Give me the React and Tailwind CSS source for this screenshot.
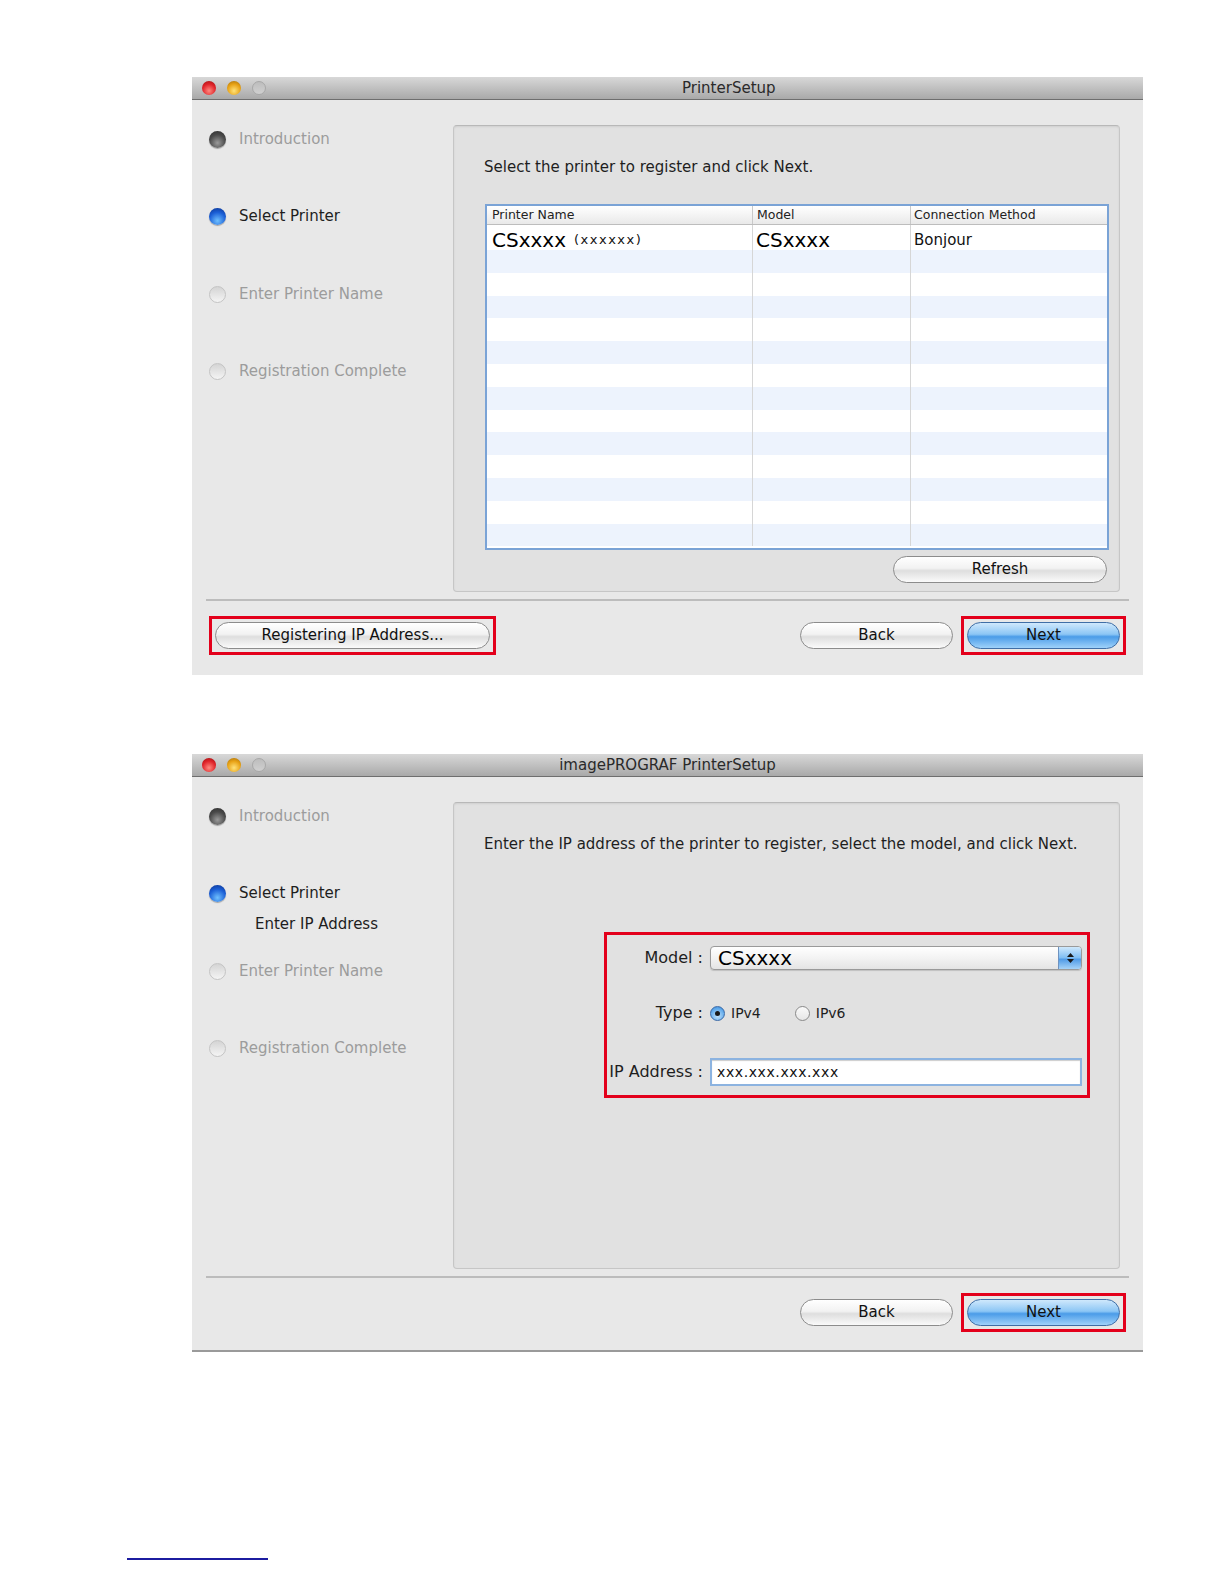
import React from 'react'

const font = { fontFamily: '"DejaVu Sans", "Liberation Sans", sans-serif' }

// little aqua sphere used for the steps list
const StepDot = ({ kind }) => {
    if (kind === 'done') {
        return <span className="block w-[17px] h-[17px] rounded-full bg-[radial-gradient(circle_at_50%_70%,#9a9a9a_0%,#4a4a4a_55%,#2a2a2a_100%)] shadow-[0_1px_1px_rgba(0,0,0,0.3)]" />
    }
    if (kind === 'current') {
        return <span className="block w-[17px] h-[17px] rounded-full bg-[radial-gradient(circle_at_50%_75%,#6fc0ff_0%,#1b5fd6_55%,#0a2f8a_100%)] shadow-[0_1px_1px_rgba(0,0,0,0.3)]" />
    }
    return <span className="block w-[17px] h-[17px] rounded-full border border-[#c4c4c4] bg-[linear-gradient(#d4d4d4,#f4f4f4)]" />
}

const Steps = ({ current, sub }) => {
    const items = ['Introduction', 'Select Printer', 'Enter Printer Name', 'Registration Complete']
    return (
        <div className="w-[261px] shrink-0 pt-[5px]">
            {items.map((label, i) => {
                const kind = i < current ? 'done' : i === current ? 'current' : 'todo'
                return (
                    <div key={label} className="h-[77.5px]">
                        <div className="flex items-center h-[18px] pl-[17px] gap-[13px]">
                            <StepDot kind={kind} />
                            <span className={`text-[15px] ${kind === 'current' ? 'text-[#1e1e1e]' : 'text-[#9c9c9c]'}`}>
                                {label}
                            </span>
                        </div>
                        {kind === 'current' && sub && (
                            <div className="pl-[63px] mt-[12px] h-[18px] leading-[18px] text-[15px] text-[#1e1e1e]">
                                {sub}
                            </div>
                        )}
                    </div>
                )
            })}
        </div>
    )
}

const Button = ({ children, width, primary }) => (
    <div
        className={`h-[27px] rounded-full flex items-center justify-center text-[15px] text-[#111] border ${
            primary
                ? 'border-[#3f6ea6] bg-[linear-gradient(#cfe8fc_0%,#8cc6f5_45%,#4b9ce8_55%,#9fd2fa_100%)]'
                : 'border-[#8c8c8c] bg-[linear-gradient(#ffffff_0%,#f2f2f2_45%,#dedede_55%,#fafafa_100%)]'
        }`}
        style={{ width }}
    >
        {children}
    </div>
)

const RedBox = ({ children }) => (
    <div className="border-[3px] border-[#e3001b] p-[3px]">{children}</div>
)

const Window = ({ title, titlePad, children, left, current, sub, bottomBorder }) => (
    <div className={`w-[951px] h-[598px] flex flex-col bg-[#e8e8e8] ${bottomBorder ? 'border-b-2 border-[#9a9a9a]' : ''}`}>
        <div className="h-[23px] shrink-0 relative flex items-center bg-[linear-gradient(#d8d8d8,#a9a9a9)] border-b border-[#6e6e6e]">
            <div className="flex items-center gap-[11px] pl-[10px]">
                <span className="block w-[14px] h-[14px] rounded-full bg-[radial-gradient(circle_at_50%_70%,#ff8a80_0%,#e0242a_55%,#9a1010_100%)]" />
                <span className="block w-[14px] h-[14px] rounded-full bg-[radial-gradient(circle_at_50%_70%,#ffe27a_0%,#e8a215_55%,#a06a08_100%)]" />
                <span className="block w-[14px] h-[14px] rounded-full border border-[#a8a8a8] bg-[linear-gradient(#bdbdbd,#d0d0d0)]" />
            </div>
            <div
                className={`absolute inset-y-0 flex items-center text-[15px] text-[#2a2a2a] ${titlePad ? '' : 'left-0 right-0 justify-center'}`}
                style={titlePad ? { left: titlePad } : undefined}
            >
                {title}
            </div>
        </div>
        <div className="flex-1 flex flex-col">
            <div className="flex pt-[25px]">
                <Steps current={current} sub={sub} />
                <div className="w-[667px] h-[467px] rounded-[4px] border border-[#c6c6c6] border-t-[#b8b8b8] bg-[#e1e1e1] shadow-[inset_0_1px_2px_rgba(0,0,0,0.08)]">
                    {children}
                </div>
            </div>
            <div className="mx-[14px] mt-[7px] h-[2px] bg-[#bcbcbc]" />
            <div className="flex items-center mt-[15px] px-[17px]">
                <div className="flex-1">{left}</div>
                <div className="flex items-center">
                    <div className="mr-[8px]">
                        <Button width={153}>Back</Button>
                    </div>
                    <RedBox>
                        <Button width={153} primary>Next</Button>
                    </RedBox>
                </div>
            </div>
        </div>
    </div>
)

const Table = () => {
    const rows = Array.from({ length: 13 })
    const cols = 'grid grid-cols-[266px_158px_196px]'
    return (
        <div className="ml-[31px] w-[624px] h-[346px] border-2 border-[#7aa3d6] bg-white overflow-hidden">
            <div className={`${cols} h-[19px] bg-[linear-gradient(#ffffff,#e9e9e9)] border-b border-[#bdbdbd] text-[12.5px] text-[#222] leading-[18px]`}>
                <div className="pl-[5px] border-r border-[#c9c9c9]">Printer Name</div>
                <div className="pl-[4px] border-r border-[#c9c9c9]">Model</div>
                <div className="pl-[3px]">Connection Method</div>
            </div>
            <div className={`${cols} h-[25px] items-center`}>
                <div className="pl-[5px] h-full flex items-center border-r border-[#d6d6d6]">
                    <span className="text-[20px] text-black">CSxxxx</span>
                    <span className="text-[13px] tracking-[1.5px] text-[#111] ml-[8px]">(xxxxxx)</span>
                </div>
                <div className="pl-[3px] h-full flex items-center border-r border-[#d6d6d6]">
                    <span className="text-[20px] text-black">CSxxxx</span>
                </div>
                <div className="pl-[3px] h-full flex items-center text-[15px] text-[#111]">Bonjour</div>
            </div>
            {rows.map((_, i) => (
                <div key={i} className={`${cols} h-[22.8px] ${i % 2 === 0 ? 'bg-[#edf3fd]' : 'bg-white'}`}>
                    <div className="border-r border-[#d6d6d6]" />
                    <div className="border-r border-[#d6d6d6]" />
                    <div />
                </div>
            ))}
        </div>
    )
}

const Radio = ({ on }) => (
    <span className={`w-[15px] h-[15px] rounded-full flex items-center justify-center border ${on ? 'border-[#3a6aa8] bg-[radial-gradient(circle_at_50%_70%,#bfe1fb_0%,#5aa6ea_70%,#3d80cc_100%)]' : 'border-[#8a8a8a] bg-[linear-gradient(#fafafa,#e6e6e6)]'}`}>
        {on && <span className="block w-[5px] h-[5px] rounded-full bg-[#1a1a1a]" />}
    </span>
)

export default function App() {
    return (
        <div className="w-[1224px] h-[1584px] bg-white overflow-hidden" style={font}>
            <div className="pt-[77px] pl-[192px]">
                <Window
                    title="PrinterSetup"
                    titlePad={490}
                    current={1}
                    left={
                        <div className="inline-block">
                            <RedBox>
                                <Button width={275}>Registering IP Address...</Button>
                            </RedBox>
                        </div>
                    }
                >
                    <div className="pt-[31px] pl-[30px] h-[20px] leading-[20px] text-[15px] text-[#1e1e1e] box-content">
                        Select the printer to register and click Next.
                    </div>
                    <div className="mt-[27px]">
                        <Table />
                    </div>
                    <div className="flex justify-end pr-[12px] mt-[6px]">
                        <Button width={214}>Refresh</Button>
                    </div>
                </Window>

                <div className="h-[79px]" />

                <Window
                    title="imagePROGRAF PrinterSetup"
                    current={1}
                    sub="Enter IP Address"
                    bottomBorder
                    left={null}
                >
                    <div className="pt-[31px] pl-[30px] h-[20px] leading-[20px] text-[15px] text-[#1e1e1e] box-content">
                        Enter the IP address of the printer to register, select the model, and click Next.
                    </div>
                    <div className="ml-[150px] mt-[78px] w-[486px] h-[166px] border-[3px] border-[#e3001b] pt-[11px] pr-[5px]">
                        <div className="grid grid-cols-[96px_1fr] gap-x-[7px] items-center text-[16px] text-[#1e1e1e]">
                            <div className="text-right">Model :</div>
                            <div className="h-[24px] flex items-center rounded-[4px] border border-[#9a9a9a] bg-[linear-gradient(#ffffff_0%,#f3f3f3_50%,#e4e4e4_100%)] shadow-[0_1px_1px_rgba(0,0,0,0.15)] overflow-hidden">
                                <span className="flex-1 pl-[7px] text-[20px] text-black">CSxxxx</span>
                                <span className="w-[23px] h-full flex flex-col items-center justify-center gap-[2px] bg-[linear-gradient(#cfe8fc_0%,#7dbdf3_50%,#4f9ae6_55%,#a6d3f8_100%)] border-l border-[#6f93c0]">
                                    <svg width="7" height="4" viewBox="0 0 7 4"><path d="M0 4 L3.5 0 L7 4 Z" fill="#1a1a1a" /></svg>
                                    <svg width="7" height="4" viewBox="0 0 7 4"><path d="M0 0 L3.5 4 L7 0 Z" fill="#1a1a1a" /></svg>
                                </span>
                            </div>

                            <div className="text-right mt-[31px]">Type :</div>
                            <div className="flex items-center mt-[31px] h-[20px]">
                                <Radio on />
                                <span className="ml-[6px] text-[14px]">IPv4</span>
                                <span className="ml-[34px]"><Radio /></span>
                                <span className="ml-[6px] text-[14px]">IPv6</span>
                            </div>

                            <div className="text-right mt-[33px] whitespace-nowrap">IP Address :</div>
                            <div className="mt-[33px] h-[28px] flex items-center border-2 border-[#8cb3e0] bg-white shadow-[inset_0_1px_1px_rgba(0,0,0,0.2)] pl-[5px] text-[14px] tracking-[0.6px] text-[#111]">
                                xxx.xxx.xxx.xxx
                            </div>
                        </div>
                    </div>
                </Window>

                <div className="mt-[206px] -ml-[65px] w-[141px] h-[2px] bg-[#1c1ca0]" />
            </div>
        </div>
    )
}
